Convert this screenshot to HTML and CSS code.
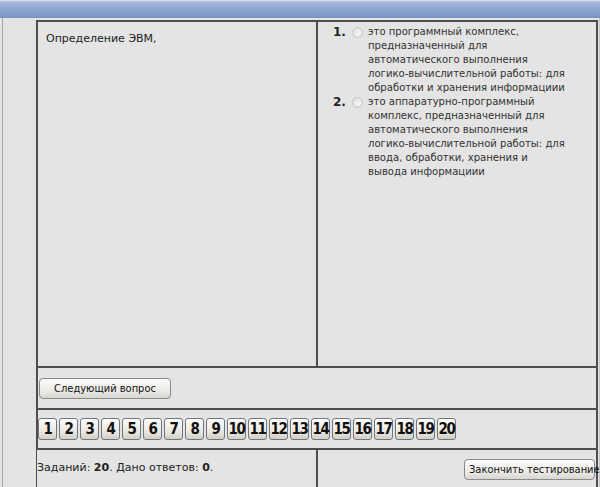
FILE: index.html
```html
<!DOCTYPE html>
<html lang="ru">
<head>
  <meta charset="UTF-8" />
  <title>Тестирование</title>
  <link rel="stylesheet" href="styles.css">
</head>
<body>
  <div class="top-bar"></div>
  <div class="frame">
    <div class="quiz">
      <div class="cell question">Определение ЭВМ,</div>
      <div class="cell answers">
        <div class="answer">
          <span class="answer-num">1.</span>
          <span class="radio"></span>
          <span class="answer-text">это программный комплекс, предназначенный для автоматического выполнения логико&#8209;вычислительной работы: для обработки и хранения информациии</span>
        </div>
        <div class="answer">
          <span class="answer-num">2.</span>
          <span class="radio"></span>
          <span class="answer-text">это аппаратурно&#8209;программный комплекс, предназначенный для автоматического выполнения логико&#8209;вычислительной работы: для ввода, обработки, хранения и вывода информациии</span>
        </div>
      </div>
      <div class="cell wide next-row">
        <button class="btn next-btn">Следующий вопрос</button>
      </div>
      <div class="cell wide nums" id="nums"></div>
      <div class="cell status">Заданий: <b>20</b>. Дано ответов: <b>0</b>.</div>
      <div class="cell finish">
        <button class="btn finish-btn">Закончить тестирование</button>
      </div>
    </div>
  </div>

  <script>
    // кнопки с номерами вопросов
    const nums = document.getElementById("nums");
    for (let i = 1; i <= 20; i++) {
      const b = document.createElement("button");
      b.className = "num-btn";
      b.textContent = i;
      nums.appendChild(b);
    }
  </script>
</body>
</html>
```

FILE: styles.css
```css
html, body {
  margin: 0;
  padding: 0;
  width: 600px;
  height: 487px;
  overflow: hidden;
  background: #e4e4e4;
  font-family: "DejaVu Sans", Verdana, sans-serif;
  font-size: 11px;
  color: #222;
}

.top-bar {
  height: 18px;
  background: linear-gradient(#b4c3df 0px, #a2b4d8 2px, #7590c2 18px);
  border-top: 1px solid #d8deea;
  box-sizing: border-box;
}

.frame {
  margin-left: 2px;
  height: 469px;
  overflow: hidden;
  border-left: 1px solid #a6a6a6;
  border-right: 1px solid #c4c4c4;
  padding: 2px 1px 0 33px;
}

.quiz {
  display: grid;
  grid-template-columns: 278px 278px;
  grid-template-rows: 344px 40px 38px 37px;
  gap: 2px;
  padding: 2px;
  background: #4e4e4e;
  width: max-content;
}

.cell {
  background: #e4e4e4;
}

.wide {
  grid-column: 1 / 3;
}

.question {
  padding: 10px 8px;
  line-height: 14px;
}

.answers {
  padding: 3px 0 0 15px;
  line-height: 14px;
  font-family: "DejaVu Sans Condensed", Tahoma, sans-serif;
  font-size: 11.2px;
}

.answer {
  display: flex;
  align-items: flex-start;
}

.answer-num {
  font-family: "DejaVu Sans", Verdana, sans-serif;
  font-weight: bold;
  font-size: 12px;
  width: 19px;
}

.radio {
  width: 9px;
  height: 9px;
  margin: 2px 5px 0 0;
  border: 1px solid #c4c4c4;
  border-radius: 50%;
  background: radial-gradient(circle at 60% 60%, #f4f4f4, #dcdcdc);
  flex: none;
}

.answer-text {
  width: 198px;
  color: #333;
}

.next-row {
  display: flex;
  align-items: center;
  padding-left: 1px;
}

.btn {
  font-family: "DejaVu Sans Condensed", Tahoma, sans-serif;
  font-size: 11px;
  color: #111;
  height: 21px;
  border: 1px solid #8a8a8a;
  border-radius: 4px;
  background: linear-gradient(#fbfbfb, #ecebe6 60%, #d8d6cf);
  padding: 0 4px;
  white-space: nowrap;
  cursor: pointer;
}

.next-btn {
  width: 132px;
}

.nums {
  display: flex;
  align-items: center;
  gap: 2px;
  padding-left: 0;
}

.num-btn {
  width: 19px;
  height: 22px;
  padding: 0;
  border: 1px solid #6f7780;
  border-radius: 3px;
  background: linear-gradient(#fdfdfb, #ebe9e1 60%, #d2cfc4);
  font-family: "DejaVu Sans Condensed", "Liberation Sans Narrow", sans-serif;
  font-weight: bold;
  font-size: 15px;
  letter-spacing: -1.5px;
  color: #111;
  cursor: pointer;
}

.status {
  padding-top: 11px;
  line-height: 14px;
  margin-left: -1px;
}

.finish {
  display: flex;
  justify-content: flex-end;
  align-items: flex-start;
  padding: 9px 1px 0 0;
}

.finish-btn {
  width: 131px;
}
```
